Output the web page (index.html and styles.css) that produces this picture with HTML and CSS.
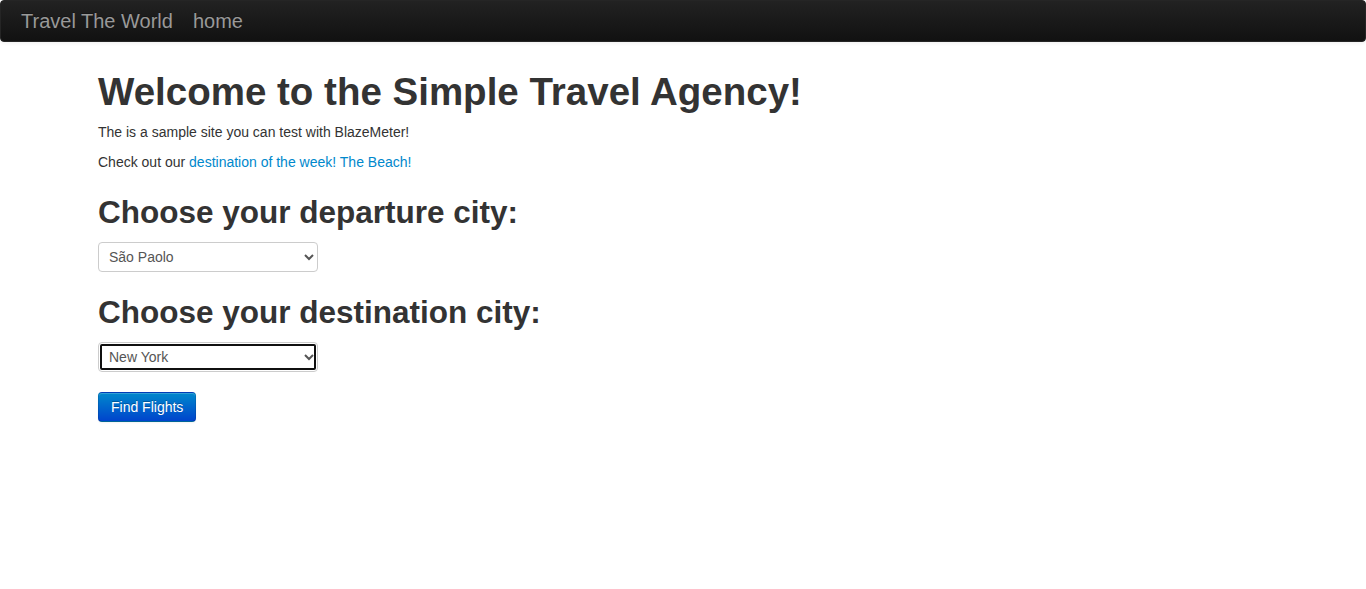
FILE: index.html
```html
<!DOCTYPE html>
<html lang="en">
<head>
<meta charset="utf-8">
<title>BlazeDemo</title>
<link rel="stylesheet" href="styles.css">
</head>
<body>
<div class="navbar">
  <div class="navbar-inner">
    <a class="brand" href="#">Travel The World</a>
    <a class="brand" href="#">home</a>
  </div>
</div>
<div class="container">
  <div class="intro">
    <h1>Welcome to the Simple Travel Agency!</h1>
    <p>The is a sample site you can test with BlazeMeter!</p>
    <p>Check out our <a href="#">destination of the week! The Beach!</a></p>
  </div>
  <form class="flight-form">
    <h2>Choose your departure city:</h2>
    <select class="city-select" name="fromPort">
      <option selected>São Paolo</option>
      <option>Paris</option>
      <option>Philadelphia</option>
      <option>Boston</option>
      <option>Portland</option>
      <option>San Diego</option>
      <option>Mexico City</option>
    </select>
    <h2>Choose your destination city:</h2>
    <select class="city-select focused" name="toPort">
      <option>Buenos Aires</option>
      <option>Rome</option>
      <option>London</option>
      <option>Berlin</option>
      <option selected>New York</option>
      <option>Dublin</option>
      <option>Cairo</option>
    </select>
    <div class="actions">
      <button type="button" class="btn-primary">Find Flights</button>
    </div>
  </form>
</div>
</body>
</html>
```
FILE: styles.css
```css
html, body {
  margin: 0;
  padding: 0;
}
body {
  font-family: "Liberation Sans", Arial, Helvetica, sans-serif;
  font-size: 14px;
  line-height: 20px;
  color: #333333;
  background: #ffffff;
}
a {
  color: #0088cc;
  text-decoration: none;
}
.navbar {
  margin-bottom: 20px;
}
.navbar-inner {
  display: flex;
  min-height: 40px;
  padding: 0 20px;
  background-color: #1b1b1b;
  background-image: linear-gradient(to bottom, #222222, #111111);
  border: 1px solid #252525;
  border-radius: 4px;
  box-shadow: 0 1px 4px rgba(0, 0, 0, 0.065);
}
.brand {
  display: block;
  padding: 10px 20px;
  margin-left: -20px;
  font-size: 20px;
  font-weight: 200;
  line-height: 20px;
  color: #999999;
  text-shadow: 0 -1px 0 rgba(0, 0, 0, 0.25);
}
.container {
  display: flow-root;
  width: 1170px;
  margin: 0 auto;
}
h1, h2 {
  margin: 10px 0;
  font-weight: bold;
  line-height: 40px;
  color: inherit;
}
h1 {
  font-size: 38.5px;
}
h2 {
  font-size: 31.5px;
}
p {
  margin: 0 0 10px;
}
.flight-form {
  margin: 20px 0 20px;
}
.flight-form h2:first-child {
  margin-top: 0;
}
.city-select {
  display: block;
  box-sizing: border-box;
  width: 220px;
  height: 30px;
  padding: 4px 6px;
  margin: 0 0 20px;
  font-family: "Liberation Sans", Arial, sans-serif;
  font-size: 14px;
  line-height: 30px;
  color: #555555;
  background-color: #ffffff;
  border: 1px solid #cccccc;
  border-radius: 4px;
}
.city-select.focused {
  outline: 2px solid #101010;
  outline-offset: -4px;
}
.btn-primary {
  display: inline-block;
  padding: 4px 12px;
  font-family: "Liberation Sans", Arial, sans-serif;
  font-size: 14px;
  line-height: 20px;
  color: #ffffff;
  text-shadow: 0 -1px 0 rgba(0, 0, 0, 0.25);
  background-color: #006dcc;
  background-image: linear-gradient(to bottom, #0088cc, #0044cc);
  border: 1px solid #0044cc;
  border-color: rgba(0, 0, 0, 0.1) rgba(0, 0, 0, 0.1) rgba(0, 0, 0, 0.25);
  border-radius: 4px;
  box-shadow: inset 0 1px 0 rgba(255, 255, 255, 0.2), 0 1px 2px rgba(0, 0, 0, 0.05);
  cursor: pointer;
}
```
